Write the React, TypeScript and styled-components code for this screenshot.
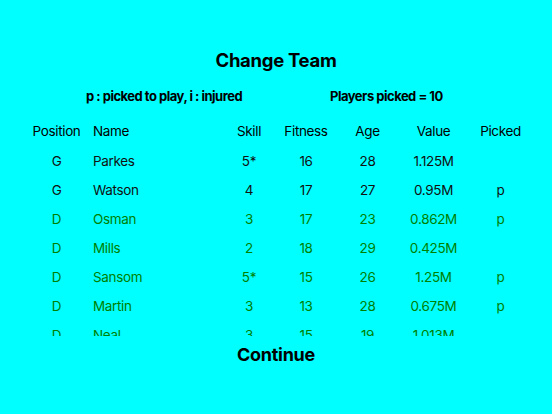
import React from "react";
import styled, { createGlobalStyle } from "styled-components";

const Global = createGlobalStyle`
  html, body { margin: 0; padding: 0; background: #00ffff; }
  body { font-family: Inter, "Noto Sans", "Liberation Sans", sans-serif; color: #000; }
`;

const Page = styled.div`
  width: 552px;
  height: 414px;
  background: #00ffff;
  display: flex;
  flex-direction: column;
  align-items: stretch;
  padding-top: 48px;
  box-sizing: border-box;
  overflow: hidden;
`;

const Title = styled.h1`
  margin: 0;
  font-size: 18.5px;
  line-height: 24px;
  font-weight: 700;
  text-align: center;
  letter-spacing: -0.3px;
`;

const InfoBar = styled.div`
  display: grid;
  grid-template-columns: 244px auto;
  padding-left: 86px;
  margin-top: 16px;
`;

const Info = styled.span`
  font-size: 13px;
  line-height: 16px;
  font-weight: 700;
  letter-spacing: -0.5px;
  white-space: nowrap;
`;

const cols = "65px 131px 58px 56px 67px 65px 69px";

const HeaderRow = styled.div`
  display: grid;
  grid-template-columns: ${cols};
  padding-left: 24px;
  height: 29px;
  align-items: center;
  margin-top: 12px;
`;

const List = styled.div`
  margin-top: 1px;
  height: 190px;
  overflow: hidden;
`;

const Row = styled.div<{ $tone: "dark" | "green" }>`
  display: grid;
  grid-template-columns: ${cols};
  padding-left: 24px;
  height: 29px;
  align-items: center;
  color: ${(p) => (p.$tone === "green" ? "#008000" : "#111")};
`;

const Cell = styled.span<{ $left?: boolean }>`
  font-size: 13.5px;
  line-height: 16px;
  font-weight: 400;
  text-align: ${(p) => (p.$left ? "left" : "center")};
  padding-left: ${(p) => (p.$left ? "4px" : "0")};
  white-space: nowrap;
  letter-spacing: -0.35px;
`;

const Continue = styled.button`
  margin: 8px auto 0;
  background: none;
  border: none;
  padding: 0;
  font-family: inherit;
  font-size: 18px;
  line-height: 22px;
  font-weight: 700;
  color: #000;
  letter-spacing: -0.3px;
  cursor: pointer;
`;

type Player = {
  pos: string;
  name: string;
  skill: string;
  fitness: number;
  age: number;
  value: string;
  picked: string;
};

const players: Player[] = [
  { pos: "G", name: "Parkes", skill: "5*", fitness: 16, age: 28, value: "1.125M", picked: "" },
  { pos: "G", name: "Watson", skill: "4", fitness: 17, age: 27, value: "0.95M", picked: "p" },
  { pos: "D", name: "Osman", skill: "3", fitness: 17, age: 23, value: "0.862M", picked: "p" },
  { pos: "D", name: "Mills", skill: "2", fitness: 18, age: 29, value: "0.425M", picked: "" },
  { pos: "D", name: "Sansom", skill: "5*", fitness: 15, age: 26, value: "1.25M", picked: "p" },
  { pos: "D", name: "Martin", skill: "3", fitness: 13, age: 28, value: "0.675M", picked: "p" },
  { pos: "D", name: "Neal", skill: "3", fitness: 15, age: 19, value: "1.013M", picked: "" },
];

export default function App() {
  return (
    <Page>
      <Global />
      <Title>Change Team</Title>
      <InfoBar>
        <Info>p : picked to play, i : injured</Info>
        <Info>Players picked = 10</Info>
      </InfoBar>
      <HeaderRow>
        <Cell>Position</Cell>
        <Cell $left>Name</Cell>
        <Cell>Skill</Cell>
        <Cell>Fitness</Cell>
        <Cell>Age</Cell>
        <Cell>Value</Cell>
        <Cell>Picked</Cell>
      </HeaderRow>
      <List>
        {players.map((p) => (
          <Row key={p.name} $tone={p.pos === "G" ? "dark" : "green"}>
            <Cell>{p.pos}</Cell>
            <Cell $left>{p.name}</Cell>
            <Cell>{p.skill}</Cell>
            <Cell>{p.fitness}</Cell>
            <Cell>{p.age}</Cell>
            <Cell>{p.value}</Cell>
            <Cell>{p.picked}</Cell>
          </Row>
        ))}
      </List>
      <Continue>Continue</Continue>
    </Page>
  );
}
